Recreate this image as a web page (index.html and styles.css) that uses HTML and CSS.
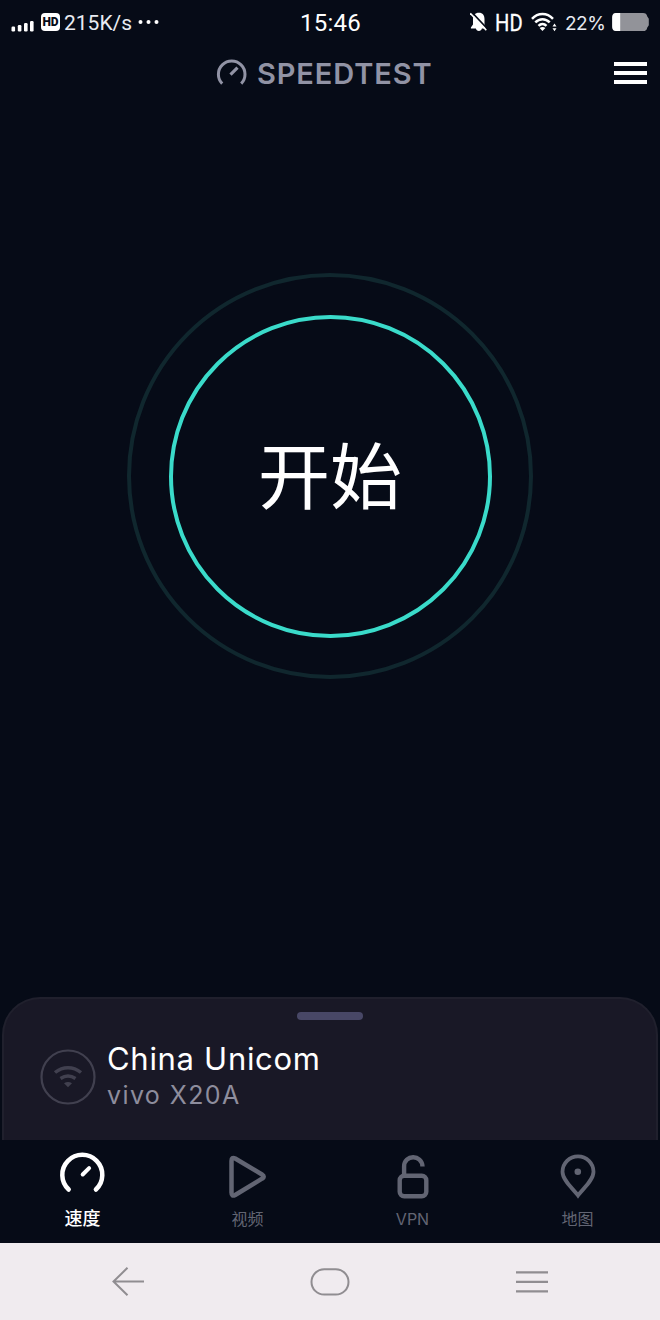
FILE: index.html
```html
<!DOCTYPE html>
<html lang="zh-CN">
<head>
<meta charset="utf-8">
<title>Speedtest</title>
<link rel="stylesheet" href="styles.css">
</head>
<body>
<div class="screen">
  <div class="status">
    <div class="status-left">
      <svg class="signal" width="24" height="12" viewBox="0 0 24 12" fill="#fff"><rect x="0.5" y="6.5" width="3.6" height="5" rx="1.2"/><rect x="6.8" y="5" width="3.6" height="6.5" rx="1.2"/><rect x="13" y="3" width="3.6" height="8.500" rx="1.2"/><rect x="19" y="1" width="3.600" height="10.500" rx="1.2"/></svg>
      <span class="badge">HD</span>
      <span class="rate">215K/s</span>
      <svg class="more" width="22" height="6" viewBox="0 0 22 6" fill="#fff"><circle cx="3.500" cy="3" r="2"/><circle cx="11.500" cy="3" r="2"/><circle cx="19.500" cy="3" r="2"/></svg>
    </div>
    <span class="clock">15:46</span>
    <div class="status-right">
      <svg width="18" height="20" viewBox="0 0 18 20"><path d="M8.900 .8C5 .8 3 3.500 3 7v5.500L.9 15.500v1h5C6.200 18 7.300 19 8.900 19s2.700-1 3-2.500h4v-1L14.500 12.500V7c0-3.500-1.700-6.200-5.600-6.200z" fill="#fff"/><path d="M1.500 0l16 17" stroke="#060b17" stroke-width="1.800"/><path d="M.3 1.300l16 17" stroke="#fff" stroke-width="1.600"/></svg>
      <span class="hd"><span class="hd-text">HD</span></span>
      <svg class="wifi" width="26" height="20" viewBox="0 0 26 20" fill="none" stroke="#fff" stroke-width="2.500"><path d="M1 6.800C7 .5 16 .5 22 6.800"/><path d="M4.300 10.400c4.200-4.300 10.200-4.300 14.400 0"/><path d="M7.500 13.800c2.400-2.300 5.600-2.300 8 0"/><path d="M8.600 15.900c1.900-1.300 3.900-1.300 5.800 0L11.500 19z" fill="#fff" stroke="none"/><path d="M21.500 14.500l2-3 2 3zM21.500 16.200l2 3 2-3z" fill="#fff" stroke="none"/></svg>
      <span class="percent">22%</span>
      <svg class="battery" width="38" height="20" viewBox="0 0 38 20"><path d="M5 1h26c2.500 0 3.800 1 4.300 3.600l1.500 2.200v6.400l-1.500 2.200C34.800 18 33.500 19 31 19H5c-3.500 0-4.800-1.300-4.800-5V6C.2 2.300 1.500 1 5 1z" fill="#929399"/><path d="M8.200 1H5C1.500 1 .2 2.300.2 6v8c0 3.700 1.300 5 4.800 5h3.200z" fill="#fff"/></svg>
    </div>
  </div>
  <header class="header">
    <svg class="logo" width="32" height="30" viewBox="0 0 32 30" fill="none" stroke="#9193a5" stroke-width="3"><path d="M6.200 25.600A13.300 13.300 0 1 1 25.200 25.600"/><path d="M14.500 16.700l7-7" stroke-width="3.200"/></svg>
    <span class="brand">SPEEDTEST</span>
    <div class="menu"><i></i><i></i><i></i></div>
  </header>
  <main class="main">
    <div class="outer"><div class="inner"><span class="start">开始</span></div></div>
  </main>
  <section class="card">
    <div class="handle"></div>
    <div class="network">
      <svg width="56" height="56" viewBox="0 0 56 56" fill="none" stroke="#41404f"><circle cx="28" cy="28" r="26.500" stroke-width="2.200"/><path d="M15 23.500c8-6.500 18-6.500 26 0M20.500 29.500c4.800-3.200 10.200-3.200 15 0" stroke-width="3.500"/><path d="M24 34.300c2.600-1.600 5.400-1.600 8 0l-4 4z" fill="#41404f" stroke="none"/></svg>
      <div class="labels">
        <div class="carrier">China Unicom</div>
        <div class="device">vivo X20A</div>
      </div>
    </div>
  </section>
  <nav class="tabs">
    <div class="tab active">
      <svg width="48" height="48" viewBox="0 0 48 48" fill="none" stroke="#fff" stroke-width="4.500" stroke-linecap="round"><path d="M9.700 37.500A20 20 0 1 1 36.900 37.500"/><path d="M23.700 22.500l6.400-6.400" stroke-width="4"/></svg>
      <span class="tab-label">速度</span>
    </div>
    <div class="tab">
      <svg width="48" height="48" viewBox="0 0 48 48" fill="none" stroke="#626573" stroke-width="4.500" stroke-linejoin="round"><path d="M7.500 9Q7.500 4.500 11.200 6.500L38 22.500Q41.500 24.700 38 26.700L11.200 43Q7.500 45 7.500 40.500z"/></svg>
      <span class="tab-label">视频</span>
    </div>
    <div class="tab">
      <svg width="48" height="48" viewBox="0 0 48 48" fill="none" stroke="#626573" stroke-width="4.400"><rect x="10.700" y="23.700" width="26.600" height="20.600" rx="4.500"/><path d="M15.100 24V14.500C15.100 2.500 33 2 33.500 14.500"/></svg>
      <span class="tab-label">VPN</span>
    </div>
    <div class="tab">
      <svg width="48" height="48" viewBox="0 0 48 48" fill="none" stroke="#626573" stroke-width="3.800"><path d="M24 43.500C19 36.500 8.500 28.500 8.500 19.800a15.500 15.500 0 0 1 31 0C39.500 28.500 29 36.500 24 43.500z"/><circle cx="23.800" cy="19.800" r="3.300" fill="#626573" stroke="none"/></svg>
      <span class="tab-label">地图</span>
    </div>
  </nav>
  <div class="system">
    <svg width="34" height="30" viewBox="0 0 34 30" fill="none" stroke="#908d91" stroke-width="2"><path d="M33 14.500H2.500M16.500 .8L2.500 14.500L16.500 28.200"/></svg>
    <svg width="40" height="28" viewBox="0 0 40 28" fill="none" stroke="#908d91" stroke-width="2"><rect x="1.500" y="1.200" width="37" height="25.400" rx="12.700"/></svg>
    <svg width="34" height="24" viewBox="0 0 34 24" stroke="#908d91" stroke-width="2.200"><path d="M1 2.400h32M1 11.900h32M1 21.400h32"/></svg>
  </div>
</div>
</body>
</html>
```
FILE: styles.css
```css
* { box-sizing: border-box; }
body { margin: 0; background: #060b17; }
svg { display: block; flex: none; }
.screen { width: 660px; height: 1320px; display: flex; flex-direction: column; background: #060b17; color: #fff; font-family: Inter, "Noto Sans CJK SC", sans-serif; white-space: nowrap; }

.status { height: 46px; display: grid; grid-template-columns: 1fr auto 1fr; align-items: center; padding: 0 10px 2px 11px; line-height: 1; }
.status-left, .status-right { display: flex; align-items: center; }
.status-right { justify-content: flex-end; }
.signal { margin-top: 8px; }
.badge { width: 19px; height: 18px; margin: 0 4px 0 6px; border-radius: 4px; background: #fff; color: #060b17; font: 900 12px/18px Roboto, sans-serif; text-align: center; }
.rate { font: 21px/1 Roboto, sans-serif; width: 68px; margin-top: 2px; color: #e9ebf2; }
.more { margin-left: 5px; }
.clock { margin-top: 2px; font: 24px/1 Roboto, sans-serif; letter-spacing: .2px; }
.hd { width: 28px; margin: 2px 0 0 7px; font: 24px/1 Roboto, sans-serif; -webkit-text-stroke: .3px #fff; }
.hd-text { display: inline-block; transform: scaleX(.84); transform-origin: left; }
.wifi { margin-left: 8px; }
.percent { width: 40px; margin: 2px 7px 0 8px; font-size: 19px; letter-spacing: -.5px; color: #e9ebf2; }

.header { height: 54px; display: flex; align-items: center; padding: 0 13px 0 216px; }
.brand { margin-left: 9px; font-size: 29px; font-weight: 600; letter-spacing: .9px; line-height: 1; color: #9193a5; }
.menu { margin-left: auto; width: 33px; display: flex; flex-direction: column; gap: 5px; }
.menu i { height: 4px; background: #fff; }

.main { flex: 1; display: flex; justify-content: center; align-items: flex-start; padding-top: 173px; }
.outer { width: 406px; height: 406px; border: 4px solid #10272e; border-radius: 50%; display: grid; place-items: center; }
.inner { width: 323px; height: 323px; border: 4px solid #3adbca; border-radius: 50%; display: grid; place-items: center; }
.start { padding-bottom: 8px; font-family: "Noto Sans CJK SC", sans-serif; font-size: 72px; line-height: 1; }

.card { height: 143px; margin: 0 2px; border: 2px solid #20202d; border-bottom: 0; border-radius: 38px 38px 0 0; background: #191826; }
.handle { width: 66px; height: 8px; margin: 13px auto 0; border-radius: 4px; background: #484766; }
.network { display: flex; align-items: center; padding: 19px 0 0 36px; }
.network svg { margin-top: 4px; }
.labels { margin-left: 11px; }
.carrier { font-size: 31px; letter-spacing: .7px; line-height: 40px; }
.device { font-size: 25px; letter-spacing: 1.4px; line-height: 32px; color: #8e8d9d; }

.tabs { height: 103px; display: grid; grid-template-columns: repeat(4, 1fr); }
.tab { display: flex; flex-direction: column; align-items: center; padding-top: 12px; color: #626573; font-size: 16px; }
.tab-label { margin-top: 8px; line-height: 22px; }
.active { color: #fff; font-size: 18px; font-weight: 500; }

.system { height: 77px; display: flex; justify-content: space-between; align-items: center; padding: 0 111px; background: #f0ebef; }
```
